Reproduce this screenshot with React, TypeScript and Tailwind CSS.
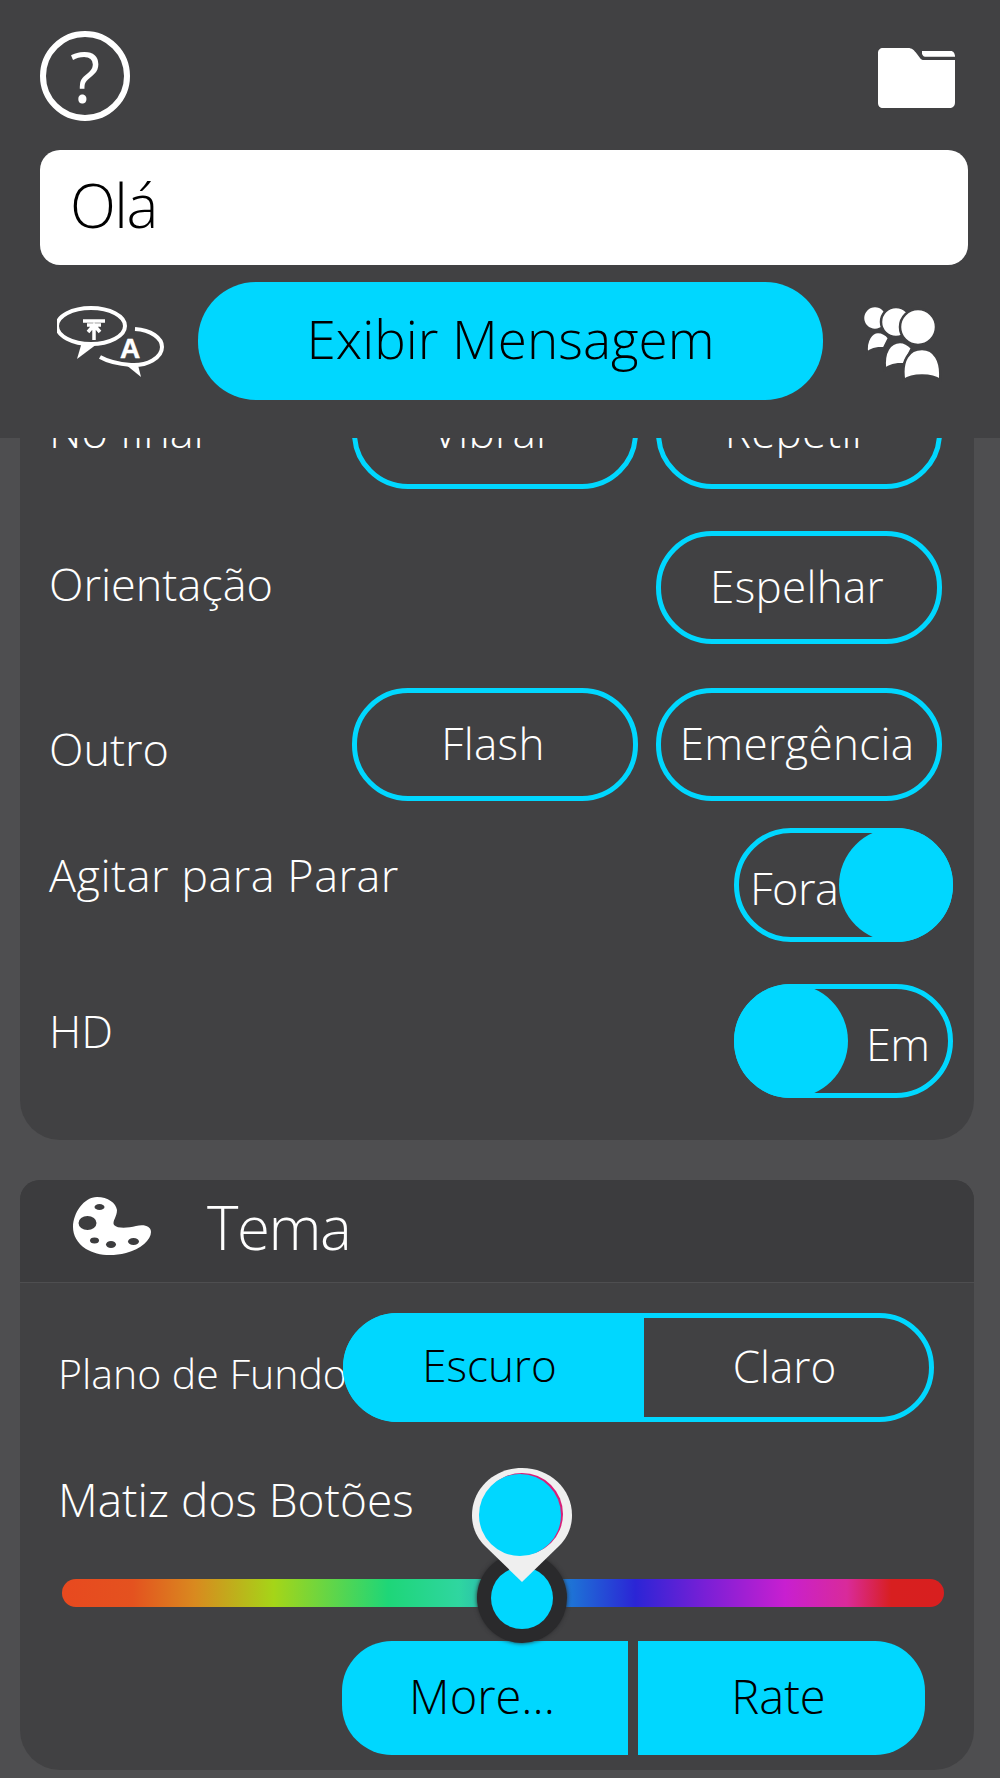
import type { ReactNode } from "react";

function FolderIcon() {
  return (
    <svg viewBox="0 0 77 60" className="w-[77px] h-[60px] mt-[3px]" fill="white">
      <path d="M5 0H30C34 0 36 2 39 6L42 10C43 11.500 44 12 46 12H77V54C77 58 75 60 71 60H5C2 60 0 58 0 55V5C0 2 2 0 5 0Z" />
      <path d="M44 3H73C75 3 77 5 77 9H47C46 9 45 8 44 6Z" />
      <path d="M45 9.500H77" stroke="#414143" strokeWidth="1.500" />
    </svg>
  );
}

function TranslateIcon() {
  return (
    <svg viewBox="0 0 115 75" className="w-[115px] h-[75px]" fill="none" stroke="white">
      <g transform="translate(-28 -22)">
        <ellipse cx="62" cy="44" rx="34" ry="18" strokeWidth="4" />
        <path d="M53 60L48 77L68 62Z" fill="white" stroke="none" />
        <path d="M54 39H76M58 43H72M65 43V58M59 50L65 43L71 50" strokeWidth="3.500" />
        <path d="M106 47C122 48 133 56 133 65C133 76 118 84 102 83C90 82 78 79 71 75" strokeWidth="4" />
        <path d="M96 82L112 95L109 83Z" fill="white" stroke="none" />
        <text
          x="101"
          y="76"
          textAnchor="middle"
          fontSize="28"
          fontWeight="700"
          fontFamily="Liberation Sans, sans-serif"
          fill="white"
          stroke="white"
          strokeWidth="0.500"
        >
          A
        </text>
      </g>
    </svg>
  );
}

function PeopleIcon() {
  return (
    <svg viewBox="0 0 80 78" className="w-[80px] h-[78px]" fill="white" stroke="#414143" strokeWidth="2.500">
      <g transform="translate(-23 -24)">
        <circle cx="35" cy="38" r="12" />
        <path d="M27 73C25 60 32 52 38 52C43 52 46 54 49 58L44 68C37 68 31 69 27 73Z" />
        <circle cx="56" cy="42" r="15" />
        <path d="M45 89C43 72 50 62 60 62C66 62 69 65 72 68L64 84C56 84 50 85 45 89Z" />
        <circle cx="78" cy="47" r="18" />
        <path d="M64 100C61 80 69 69 82 69C94 69 102 80 100 100C92 94 72 94 64 100Z" />
      </g>
    </svg>
  );
}

function PaletteIcon() {
  return (
    <svg viewBox="73 79 79 60" className="w-[79px] h-[60px]">
      <path
        fill="white"
        d="M97 79C108 79 116 85 117 92C117 99 112 103 114 107C118 111 128 110 136 108C144 106 151 108 151 114C151 122 141 131 126 135C110 139 96 137 86 131C77 125 73 117 73 109C73 95 84 79 97 79Z"
      />
      <g fill="#3c3c3e">
        <ellipse cx="87.500" cy="105" rx="9" ry="7" />
        <ellipse cx="99.500" cy="89" rx="5" ry="3" />
        <ellipse cx="94.500" cy="122.500" rx="4.500" ry="3" />
        <ellipse cx="111" cy="126.500" rx="5" ry="3.500" />
        <ellipse cx="133.500" cy="123.500" rx="5.500" ry="3.500" />
      </g>
    </svg>
  );
}

function OutlineButton({ children }: { children: ReactNode }) {
  return (
    <button
      type="button"
      className="flex items-center justify-center w-[286px] h-[113px] pb-[3px] pr-[4px] rounded-[56px] border-[5px] border-[#00d7ff] text-[44px] tracking-[0.3px] whitespace-nowrap text-white"
    >
      {children}
    </button>
  );
}

function Toggle({ label, on }: { label: string; on: boolean }) {
  return (
    <div
      className={`flex items-center w-[219px] h-[114px] rounded-full border-[5px] border-[#00d7ff] text-[45px] tracking-[-0.5px] text-white ${
        on ? "flex-row" : "flex-row-reverse"
      }`}
    >
      <span className={`w-[114px] h-[114px] shrink-0 rounded-full bg-[#00d7ff] ${on ? "-ml-[5px]" : "-mr-[5px]"}`} />
      <span className={`flex-1 pt-[6px] ${on ? "pl-[18px]" : "pl-[11px]"}`}>{label}</span>
    </div>
  );
}

function SliderThumb() {
  return (
    <>
      <div className="absolute left-[415px] top-[-26px] w-[90px] h-[90px] rounded-full bg-[#2a2a2c] shadow-[0_0_4px_#2a2a2c] flex items-center justify-center">
        <div className="w-[62px] h-[62px] rounded-full bg-[#00d7ff]" />
      </div>
      <svg viewBox="0 0 102 116" className="absolute left-[409px] top-[-111px] w-[102px] h-[116px]">
        <path
          d="M51 0C79 0 101 21 101 47C101 60 96 70 88 78L51 114L14 78C6 70 1 60 1 47C1 21 23 0 51 0Z"
          fill="#efefef"
        />
        <circle cx="51" cy="46" r="41" fill="#d81f78" />
        <circle cx="49" cy="47" r="41" fill="#00d7ff" />
      </svg>
    </>
  );
}

export default function App() {
  return (
    <div className="w-[1000px] h-[1778px] overflow-hidden bg-[#4e4e50] font-['Open_Sans',sans-serif] font-light text-white flex flex-col">
      <header className="h-[438px] shrink-0 relative z-10 bg-[#414143] pl-[40px] pr-[32px] pt-[31px]">
        <div className="flex items-center justify-between h-[90px] pr-[13px]">
          <div className="w-[90px] h-[90px] rounded-full border-[6px] border-white flex items-center justify-center text-[70px] font-normal leading-none">
            ?
          </div>
          <FolderIcon />
        </div>
        <div className="mt-[29px] h-[115px] rounded-[20px] bg-white flex items-center pl-[30px] pb-[6px] text-[60px] tracking-[-1.500px] text-black">
          Olá
        </div>
        <div className="mt-[17px] flex items-center">
          <div className="w-[158px] pl-[17px]">
            <TranslateIcon />
          </div>
          <button
            type="button"
            className="w-[625px] h-[118px] pb-[5px] rounded-[58px] bg-[#00d7ff] text-[53px] text-black"
          >
            Exibir Mensagem
          </button>
          <div className="ml-[40px] pt-[4px]">
            <PeopleIcon />
          </div>
        </div>
      </header>

      <main className="flex-1 pl-[20px] pr-[26px] pb-[8px] flex flex-col gap-[40px]">
        <section className="h-[702px] rounded-b-[40px] bg-[#414143] overflow-hidden pl-[29px] pr-[21px] text-[45px]">
          <div className="flex flex-col -mt-[62px]">
            <div className="flex items-center justify-between h-[113px] pr-[11px]">
              <span className="mb-[4px]">No final</span>
              <div className="flex gap-[18px]">
                <OutlineButton>Vibrar</OutlineButton>
                <OutlineButton>Repetir</OutlineButton>
              </div>
            </div>
            <div className="mt-[42px] flex items-center justify-between h-[113px] pr-[11px]">
              <span className="mb-[8px]">Orientação</span>
              <OutlineButton>Espelhar</OutlineButton>
            </div>
            <div className="mt-[44px] flex items-center justify-between h-[112px] pr-[11px]">
              <span className="mt-[10px]">Outro</span>
              <div className="flex gap-[18px]">
                <OutlineButton>Flash</OutlineButton>
                <OutlineButton>Emergência</OutlineButton>
              </div>
            </div>
            <div className="mt-[28px] flex items-center justify-between h-[114px]">
              <span className="mb-[20px] tracking-[0.5px]">Agitar para Parar</span>
              <Toggle label="Fora" on={false} />
            </div>
            <div className="mt-[42px] flex items-center justify-between h-[114px]">
              <span className="mb-[20px]">HD</span>
              <Toggle label="Em" on={true} />
            </div>
          </div>
        </section>

        <section className="h-[590px] rounded-t-[20px] rounded-b-[40px] bg-[#414143] overflow-hidden">
          <div className="h-[103px] bg-[#3c3c3e] border-b border-[#4e4e50] flex items-center pl-[53px] pb-[8px]">
            <PaletteIcon />
            <h2 className="ml-[55px] text-[60px] tracking-[-1.500px] leading-none">Tema</h2>
          </div>
          <div className="pl-[38px] pr-[34px] pt-[30px] text-[41px]">
            <div className="flex items-center h-[109px]">
              <span className="w-[285px] shrink-0 mt-[12px] whitespace-nowrap">Plano de Fundo</span>
              <div className="flex w-[591px] h-[109px] rounded-full border-[5px] border-[#00d7ff] text-[44px]">
                <span className="w-[301px] -m-[5px] mr-0 pb-[5px] pr-[8px] rounded-l-full bg-[#00d7ff] text-black flex items-center justify-center">
                  Escuro
                </span>
                <span className="flex-1 flex items-center justify-center pb-[4px] pr-[4px]">Claro</span>
              </div>
            </div>
            <div className="mt-[48px] text-[46px] leading-[58px]">Matiz dos Botões</div>
            <div className="relative mt-[51px] ml-[4px] w-[882px] h-[28px] rounded-full bg-[linear-gradient(90deg,#e8491f_0%,#e4521f_8%,#d9891f_15%,#a5d518_24%,#1ed678_37%,#2fd6a0_45%,#1e70d6_58%,#2b25d6_65%,#7a1fd6_73%,#c81fd0_82%,#d92a9a_89%,#d81f20_94%,#d81f1f_100%)]">
              <SliderThumb />
            </div>
            <div className="mt-[34px] ml-[284px] flex gap-[10px] text-[47px] text-black">
              <button type="button" className="w-[286px] h-[114px] pr-[6px] pb-[4px] rounded-l-[50px] bg-[#00d7ff]">
                More...
              </button>
              <button type="button" className="w-[287px] h-[114px] pr-[6px] pb-[4px] rounded-r-[50px] bg-[#00d7ff]">
                Rate
              </button>
            </div>
          </div>
        </section>
      </main>
    </div>
  );
}
